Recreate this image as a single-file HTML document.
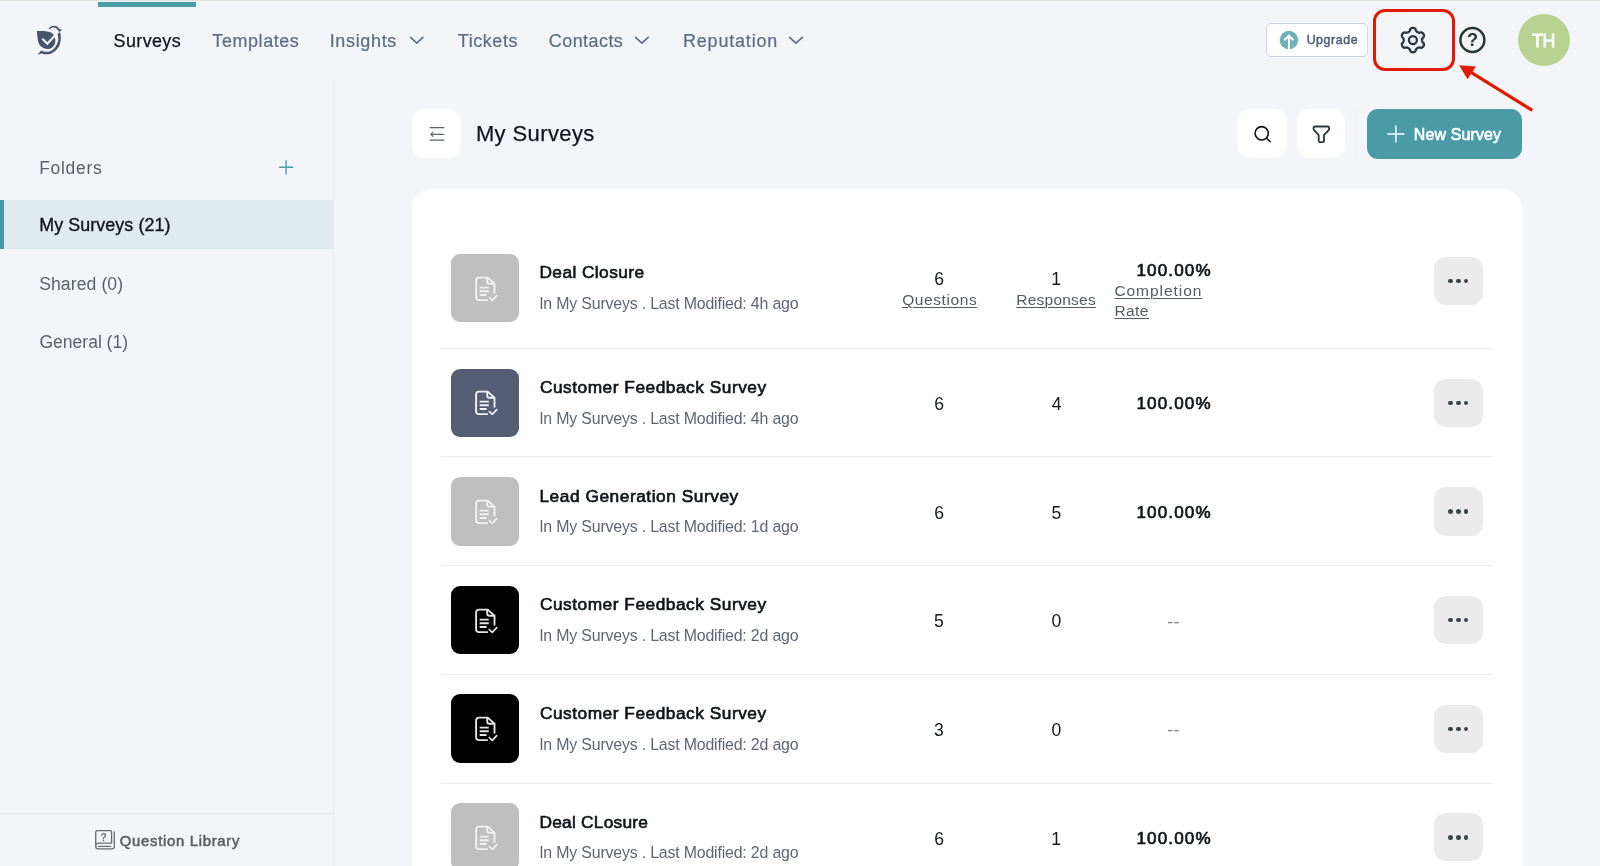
<!DOCTYPE html>
<html lang="en"><head><meta charset="utf-8"><title>My Surveys</title>
<style>
html,body{margin:0;padding:0}
body{width:1600px;height:866px;overflow:hidden;background:#f3f5f9;position:relative;font-family:"Liberation Sans",sans-serif;}
.t{position:absolute;white-space:nowrap;line-height:1;}#root{position:absolute;left:0;top:0;width:1600px;height:866px;will-change:transform}
.b{position:absolute;display:block}

</style></head><body><div id="root">
<header>
<div class="b" style="left:0.00px;top:0.00px;width:1600.00px;height:1.00px;background:#e3e4e2;border-radius:0px;"></div>
<div class="b" style="left:98.00px;top:2.40px;width:98.00px;height:4.60px;background:#4a9ba6;border-radius:0px;"></div>
<svg class="b" style="left:30px;top:20px" width="40" height="40" viewBox="30 20 40 40">
<g fill="#47546f">
<path d="M36.9 31.1 C41 30.6 46.5 31 50.3 32.2 C51.8 32.8 53 33.8 53.6 34.8 C55 37 55.6 40 55.2 42.2 C54.8 44.5 54.2 45.2 53.6 45.9 C52 47.8 50.5 48.6 48.5 48.9 C46.8 49.1 45.2 48.8 43.9 48.2 C42 47.3 40.6 46.3 39.7 44.9 C38.6 43.2 38.1 41.5 37.85 39.9 C37.4 37 37 34 36.9 31.1 Z"/>
<path d="M59.6 31.8 C61.3 35 61.2 41 59.6 44.9 C58 49 54 52.6 49.9 53.9 C47 54.7 44 54.3 42.2 53.4 L37.4 54.6 L41.3 50.5 C44 52.2 48 52 50.8 50.9 C54 49.5 56.8 45.5 57.9 41.7 C58.6 39 58.3 36.3 57.3 34.3 Z"/>
<path d="M48.7 28.5 C50 26.6 52.2 25.6 54 25.8 C55.8 25.9 57.3 26.5 58.2 27.4 L59.6 29.2 L62.3 29.5 L59.6 31.8 L58.9 32 C58.6 31 58.2 30.4 57.7 29.9 C56.8 28.6 55.4 27.7 54 27.6 C52.4 27.5 50.8 28.2 49.6 29.2 Z"/>
</g>
<path d="M42.3 38.8 L47.3 43.7 L58.3 31.9" fill="none" stroke="#f3f5f9" stroke-width="2.1"/>
</svg>
<div class="t" style="left:113.59px;top:32.81px;font-size:17.95px;letter-spacing:0.385px;color:#10151a;-webkit-text-stroke-width:0.25px;">Surveys</div>
<div class="t" style="left:212.35px;top:32.81px;font-size:17.95px;letter-spacing:0.590px;color:#5b6b87;-webkit-text-stroke-width:0.2px;">Templates</div>
<div class="t" style="left:329.66px;top:32.81px;font-size:17.95px;letter-spacing:0.685px;color:#5b6b87;-webkit-text-stroke-width:0.2px;">Insights</div>
<div class="t" style="left:457.80px;top:32.81px;font-size:17.95px;letter-spacing:0.591px;color:#5b6b87;-webkit-text-stroke-width:0.2px;">Tickets</div>
<div class="t" style="left:548.83px;top:32.81px;font-size:17.95px;letter-spacing:0.456px;color:#5b6b87;-webkit-text-stroke-width:0.2px;">Contacts</div>
<div class="t" style="left:682.97px;top:32.81px;font-size:17.95px;letter-spacing:0.842px;color:#5b6b87;-webkit-text-stroke-width:0.2px;">Reputation</div>
<svg class="b" style="left:408px;top:35.25px" width="17.5" height="10.75" viewBox="408 35.25 17.5 10.75"><path d="M410.6 37.65 L416.75 43.4 L422.9 37.65" fill="none" stroke="#5b6b87" stroke-width="1.6" stroke-linecap="round" stroke-linejoin="round"/></svg>
<svg class="b" style="left:633px;top:35.25px" width="17.799999999999955" height="10.75" viewBox="633 35.25 17.799999999999955 10.75"><path d="M635.6 37.65 L641.9 43.4 L648.1999999999999 37.65" fill="none" stroke="#5b6b87" stroke-width="1.6" stroke-linecap="round" stroke-linejoin="round"/></svg>
<svg class="b" style="left:787.3px;top:35.25px" width="17.90000000000009" height="10.75" viewBox="787.3 35.25 17.90000000000009 10.75"><path d="M789.9 37.65 L796.25 43.4 L802.6 37.65" fill="none" stroke="#5b6b87" stroke-width="1.6" stroke-linecap="round" stroke-linejoin="round"/></svg>
<div class="b" style="left:1265.70px;top:23.00px;width:102.10px;height:33.80px;background:#fff;border-radius:5px;border:1px solid #cdd4df;box-sizing:border-box;"></div>
<svg class="b" style="left:1278px;top:29px" width="22" height="22" viewBox="1278 29 22 22">
<circle cx="1288.9" cy="39.9" r="9.2" fill="#6db0b7"/>
<path d="M1288.9 49.4 V36.2 M1284.3 40.2 L1288.9 35.6 L1293.5 40.2" fill="none" stroke="#fff" stroke-width="2" stroke-linejoin="miter"/>
</svg>
<div class="t" style="left:1306.64px;top:33.80px;font-size:12.29px;letter-spacing:0.628px;color:#4e5d7b;-webkit-text-stroke-width:0.5px;">Upgrade</div>
<div class="b" style="left:1373.00px;top:9.00px;width:82.00px;height:62.00px;background:transparent;border-radius:12px;border:3px solid #e01b00;box-sizing:border-box;"></div>
<svg class="b" style="left:1396px;top:23px" width="34" height="34" viewBox="1396 23 34 34">
<path d="M1422.10 40.10 L1422.10 39.94 L1422.11 39.78 L1422.13 39.62 L1422.15 39.45 L1422.18 39.29 L1422.21 39.12 L1422.26 38.95 L1422.30 38.78 L1422.36 38.60 L1422.43 38.42 L1422.51 38.23 L1422.60 38.04 L1422.71 37.84 L1422.86 37.62 L1423.24 37.33 L1423.60 37.03 L1423.74 36.79 L1423.82 36.55 L1423.88 36.32 L1423.92 36.09 L1423.93 35.86 L1423.94 35.64 L1423.92 35.42 L1423.89 35.20 L1423.85 34.99 L1423.80 34.78 L1423.73 34.58 L1423.66 34.38 L1423.57 34.19 L1423.47 34.00 L1423.35 33.82 L1423.23 33.64 L1423.10 33.48 L1422.95 33.32 L1422.80 33.17 L1422.64 33.03 L1422.46 32.89 L1422.28 32.77 L1422.09 32.66 L1421.88 32.56 L1421.67 32.48 L1421.44 32.41 L1421.19 32.37 L1420.91 32.37 L1420.47 32.53 L1420.03 32.71 L1419.77 32.74 L1419.53 32.73 L1419.32 32.71 L1419.12 32.69 L1418.93 32.65 L1418.75 32.62 L1418.57 32.57 L1418.40 32.52 L1418.24 32.47 L1418.09 32.41 L1417.93 32.35 L1417.78 32.28 L1417.64 32.21 L1417.50 32.13 L1417.36 32.05 L1417.23 31.96 L1417.10 31.87 L1416.96 31.77 L1416.84 31.66 L1416.71 31.54 L1416.58 31.42 L1416.46 31.29 L1416.33 31.16 L1416.21 31.01 L1416.09 30.85 L1415.96 30.67 L1415.84 30.47 L1415.73 30.23 L1415.67 29.76 L1415.59 29.30 L1415.45 29.06 L1415.29 28.86 L1415.12 28.70 L1414.94 28.55 L1414.75 28.43 L1414.56 28.31 L1414.36 28.22 L1414.16 28.13 L1413.95 28.06 L1413.75 28.00 L1413.54 27.96 L1413.33 27.93 L1413.11 27.91 L1412.90 27.90 L1412.69 27.91 L1412.47 27.93 L1412.26 27.96 L1412.05 28.00 L1411.85 28.06 L1411.64 28.13 L1411.44 28.22 L1411.24 28.31 L1411.05 28.43 L1410.86 28.55 L1410.68 28.70 L1410.51 28.86 L1410.35 29.06 L1410.21 29.30 L1410.13 29.76 L1410.07 30.23 L1409.96 30.47 L1409.84 30.67 L1409.71 30.85 L1409.59 31.01 L1409.47 31.16 L1409.34 31.29 L1409.22 31.42 L1409.09 31.54 L1408.96 31.66 L1408.84 31.77 L1408.70 31.87 L1408.57 31.96 L1408.44 32.05 L1408.30 32.13 L1408.16 32.21 L1408.02 32.28 L1407.87 32.35 L1407.71 32.41 L1407.56 32.47 L1407.40 32.52 L1407.23 32.57 L1407.05 32.62 L1406.87 32.65 L1406.68 32.69 L1406.48 32.71 L1406.27 32.73 L1406.03 32.74 L1405.77 32.71 L1405.33 32.53 L1404.89 32.37 L1404.61 32.37 L1404.36 32.41 L1404.13 32.48 L1403.92 32.56 L1403.71 32.66 L1403.52 32.77 L1403.34 32.89 L1403.16 33.03 L1403.00 33.17 L1402.85 33.32 L1402.70 33.48 L1402.57 33.64 L1402.45 33.82 L1402.33 34.00 L1402.23 34.19 L1402.14 34.38 L1402.07 34.58 L1402.00 34.78 L1401.95 34.99 L1401.91 35.20 L1401.88 35.42 L1401.86 35.64 L1401.87 35.86 L1401.88 36.09 L1401.92 36.32 L1401.98 36.55 L1402.06 36.79 L1402.20 37.03 L1402.56 37.33 L1402.94 37.62 L1403.09 37.84 L1403.20 38.04 L1403.29 38.23 L1403.37 38.42 L1403.44 38.60 L1403.50 38.78 L1403.54 38.95 L1403.59 39.12 L1403.62 39.29 L1403.65 39.45 L1403.67 39.62 L1403.69 39.78 L1403.70 39.94 L1403.70 40.10 L1403.70 40.26 L1403.69 40.42 L1403.67 40.58 L1403.65 40.75 L1403.62 40.91 L1403.59 41.08 L1403.54 41.25 L1403.50 41.42 L1403.44 41.60 L1403.37 41.78 L1403.29 41.97 L1403.20 42.16 L1403.09 42.36 L1402.94 42.58 L1402.56 42.87 L1402.20 43.17 L1402.06 43.41 L1401.98 43.65 L1401.92 43.88 L1401.88 44.11 L1401.87 44.34 L1401.86 44.56 L1401.88 44.78 L1401.91 45.00 L1401.95 45.21 L1402.00 45.42 L1402.07 45.62 L1402.14 45.82 L1402.23 46.01 L1402.33 46.20 L1402.45 46.38 L1402.57 46.56 L1402.70 46.72 L1402.85 46.88 L1403.00 47.03 L1403.16 47.17 L1403.34 47.31 L1403.52 47.43 L1403.71 47.54 L1403.92 47.64 L1404.13 47.72 L1404.36 47.79 L1404.61 47.83 L1404.89 47.83 L1405.33 47.67 L1405.77 47.49 L1406.03 47.46 L1406.27 47.47 L1406.48 47.49 L1406.68 47.51 L1406.87 47.55 L1407.05 47.58 L1407.23 47.63 L1407.40 47.68 L1407.56 47.73 L1407.71 47.79 L1407.87 47.85 L1408.02 47.92 L1408.16 47.99 L1408.30 48.07 L1408.44 48.15 L1408.57 48.24 L1408.70 48.33 L1408.84 48.43 L1408.96 48.54 L1409.09 48.66 L1409.22 48.78 L1409.34 48.91 L1409.47 49.04 L1409.59 49.19 L1409.71 49.35 L1409.84 49.53 L1409.96 49.73 L1410.07 49.97 L1410.13 50.44 L1410.21 50.90 L1410.35 51.14 L1410.51 51.34 L1410.68 51.50 L1410.86 51.65 L1411.05 51.77 L1411.24 51.89 L1411.44 51.98 L1411.64 52.07 L1411.85 52.14 L1412.05 52.20 L1412.26 52.24 L1412.47 52.27 L1412.69 52.29 L1412.90 52.30 L1413.11 52.29 L1413.33 52.27 L1413.54 52.24 L1413.75 52.20 L1413.95 52.14 L1414.16 52.07 L1414.36 51.98 L1414.56 51.89 L1414.75 51.77 L1414.94 51.65 L1415.12 51.50 L1415.29 51.34 L1415.45 51.14 L1415.59 50.90 L1415.67 50.44 L1415.73 49.97 L1415.84 49.73 L1415.96 49.53 L1416.09 49.35 L1416.21 49.19 L1416.33 49.04 L1416.46 48.91 L1416.58 48.78 L1416.71 48.66 L1416.84 48.54 L1416.96 48.43 L1417.10 48.33 L1417.23 48.24 L1417.36 48.15 L1417.50 48.07 L1417.64 47.99 L1417.78 47.92 L1417.93 47.85 L1418.09 47.79 L1418.24 47.73 L1418.40 47.68 L1418.57 47.63 L1418.75 47.58 L1418.93 47.55 L1419.12 47.51 L1419.32 47.49 L1419.53 47.47 L1419.77 47.46 L1420.03 47.49 L1420.47 47.67 L1420.91 47.83 L1421.19 47.83 L1421.44 47.79 L1421.67 47.72 L1421.88 47.64 L1422.09 47.54 L1422.28 47.43 L1422.46 47.31 L1422.64 47.17 L1422.80 47.03 L1422.95 46.88 L1423.10 46.72 L1423.23 46.56 L1423.35 46.38 L1423.47 46.20 L1423.57 46.01 L1423.66 45.82 L1423.73 45.62 L1423.80 45.42 L1423.85 45.21 L1423.89 45.00 L1423.92 44.78 L1423.94 44.56 L1423.93 44.34 L1423.92 44.11 L1423.88 43.88 L1423.82 43.65 L1423.74 43.41 L1423.60 43.17 L1423.24 42.87 L1422.86 42.58 L1422.71 42.36 L1422.60 42.16 L1422.51 41.97 L1422.43 41.78 L1422.36 41.60 L1422.30 41.42 L1422.26 41.25 L1422.21 41.08 L1422.18 40.91 L1422.15 40.75 L1422.13 40.58 L1422.11 40.42 L1422.10 40.26 Z" fill="none" stroke="#27383c" stroke-width="2.3" stroke-linejoin="round"/>
<circle cx="1412.9" cy="40.1" r="4" fill="none" stroke="#27383c" stroke-width="2.3"/>
</svg>
<svg class="b" style="left:1456px;top:24px" width="33" height="33" viewBox="1456 24 33 33">
<circle cx="1472.4" cy="40" r="12.0" fill="none" stroke="#27383c" stroke-width="2.5"/>
</svg>
<div class="t" style="left:1466.91px;top:31.29px;font-size:18.20px;letter-spacing:0.000px;color:#27383c;font-weight:700;">?</div>
<div class="b" style="left:1517.80px;top:14.30px;width:51.80px;height:51.80px;background:#b8d38f;border-radius:26px;"></div>
<div class="t" style="left:1532.05px;top:32.99px;font-size:17.74px;letter-spacing:-0.313px;color:#fff;-webkit-text-stroke-width:0.8px;">TH</div>
<svg class="b" style="left:1450px;top:55px" width="100" height="70" viewBox="1450 55 100 70">
<path d="M1532.3 110.4 L1471.5 72.7" stroke="#e01b00" stroke-width="3.2" fill="none"/>
<path d="M1459.1 65.2 L1475.9 66.6 L1467.6 79.2 Z" fill="#e01b00"/>
</svg>
</header><aside>
<div class="b" style="left:333.00px;top:80.00px;width:1.00px;height:786.00px;background:#e9ebee;border-radius:0px;"></div>
<div class="t" style="left:39.27px;top:160.22px;font-size:17.46px;letter-spacing:0.707px;color:#5b6266;">Folders</div>
<svg class="b" style="left:277px;top:158px" width="18" height="18" viewBox="277 158 18 18"><path d="M279 167.3 H293.2 M286.1 160.2 V174.4" stroke="#4a9ba6" stroke-width="1.4" fill="none"/></svg>
<div class="b" style="left:0.00px;top:199.90px;width:333.00px;height:48.90px;background:#e1eaed;border-radius:0px;"></div>
<div class="b" style="left:0.00px;top:199.90px;width:3.80px;height:48.90px;background:#4a9ba6;border-radius:0px;"></div>
<div class="t" style="left:39.34px;top:216.77px;font-size:17.88px;letter-spacing:0.076px;color:#10151a;-webkit-text-stroke-width:0.35px;">My Surveys (21)</div>
<div class="t" style="left:39.17px;top:275.80px;font-size:17.60px;letter-spacing:0.087px;color:#5b6266;">Shared (0)</div>
<div class="t" style="left:39.42px;top:334.00px;font-size:17.60px;letter-spacing:-0.033px;color:#5b6266;">General (1)</div>
<div class="b" style="left:0.00px;top:812.80px;width:333.00px;height:1.00px;background:#e3e5e8;border-radius:0px;"></div>
<div class="t" style="left:119.86px;top:833.57px;font-size:14.80px;letter-spacing:0.730px;color:#5e5e5e;-webkit-text-stroke-width:0.55px;">Question Library</div>
<svg class="b" style="left:93px;top:828px" width="24" height="24" viewBox="93 828 24 24">
<g fill="none" stroke="#6c6c6c" stroke-width="1.3" stroke-linejoin="round" stroke-linecap="round">
<path d="M97.6 830.6 H110.2 Q111.6 830.6 111.6 832 V843.2 H98.6 Q95.7 843.2 95.7 846 V832.5 Q95.7 830.6 97.6 830.6 Z"/>
<path d="M114.3 832 V846.5 Q114.3 848.9 112 848.9 H98.4 Q95.7 848.9 95.7 846"/>
<path d="M98.6 846.4 H110.6" stroke-width="1.1"/>
</g></svg>
<div class="t" style="left:100.46px;top:832.67px;font-size:10.20px;letter-spacing:0.000px;color:#6a6e70;font-weight:700;">?</div>
</aside><main>
<div class="b" style="left:412.00px;top:109.30px;width:48.90px;height:48.80px;background:#fff;border-radius:13px;"></div>
<svg class="b" style="left:426px;top:124px" width="22" height="20" viewBox="426 124 22 20">
<g fill="none" stroke="#5c6467" stroke-width="1.25">
<path d="M429.7 127.7 H444.3 M431 134.3 H444.3 M429.7 140 H444.3"/>
<path d="M433.3 131.9 L430.8 134.3 L433.3 136.7" stroke-width="1.1"/>
</g></svg>
<div class="t" style="left:475.88px;top:123.23px;font-size:22.00px;letter-spacing:0.390px;color:#10151a;-webkit-text-stroke-width:0.25px;">My Surveys</div>
<div class="b" style="left:1238.00px;top:109.20px;width:49.30px;height:49.00px;background:#fff;border-radius:13px;"></div>
<div class="b" style="left:1296.90px;top:109.20px;width:48.50px;height:49.00px;background:#fff;border-radius:13px;"></div>
<svg class="b" style="left:1250px;top:122px" width="24" height="24" viewBox="1250 122 24 24">
<circle cx="1261.7" cy="133.3" r="6.65" fill="none" stroke="#101010" stroke-width="1.6"/>
<path d="M1266.6 138.2 L1270.2 141.7" stroke="#101010" stroke-width="1.6" stroke-linecap="round"/>
</svg>
<svg class="b" style="left:1309px;top:122px" width="24" height="24" viewBox="1309 122 24 24">
<path d="M1314.9 126.5 H1327.8 Q1329.1 126.5 1329.1 127.8 V129.6 L1324 135.2 V141 Q1324 142.1 1322.9 142.1 H1319.8 Q1318.7 142.1 1318.7 141 V135.2 L1313.6 129.6 V127.8 Q1313.6 126.5 1314.9 126.5 Z" fill="none" stroke="#27383c" stroke-width="1.8" stroke-linejoin="round"/>
</svg>
<div class="b" style="left:1355.60px;top:109.00px;width:1.00px;height:50.00px;background:#eceef1;border-radius:0px;"></div>
<div class="b" style="left:1366.70px;top:108.80px;width:155.10px;height:50.20px;background:#4a9ba6;border-radius:11px;"></div>
<svg class="b" style="left:1385px;top:124px" width="22" height="20" viewBox="1385 124 22 20"><path d="M1387.4 134 H1404.4 M1395.9 125.5 V142.5" stroke="#fff" stroke-width="1.4" fill="none"/></svg>
<div class="t" style="left:1413.85px;top:127.42px;font-size:15.92px;letter-spacing:0.154px;color:#fff;-webkit-text-stroke-width:0.6px;">New Survey</div>
<div class="b" style="left:412.00px;top:189.00px;width:1110.00px;height:711.00px;background:#fff;border-radius:20px;"></div>
<div class="b" style="left:451.05px;top:253.80px;width:68.35px;height:68.40px;background:#bfbfbf;border-radius:9px;"></div>
<svg class="b" style="left:473.55px;top:274.6px" width="30" height="32" viewBox="0 0 30 32">
<g fill="none" stroke="#f1f1f1" stroke-width="1.9" stroke-linecap="round" stroke-linejoin="round">
<path d="M20.5 17.8 V8.8 L13.7 2.6 H4.9 Q2.1 2.6 2.1 5.4 V22.3 Q2.1 25.1 4.9 25.1 H13.2"/>
<path d="M13.2 2.9 V6.5 Q13.2 8.8 15.5 8.8 H20.2"/>
<path d="M5.7 12.6 H14.8 M5.7 16.3 H14.8 M5.7 20 H12.6" stroke-width="1.9" stroke-linecap="butt"/>
<path d="M15.2 22.5 L18.3 25.4 L22.7 20.6" stroke-width="1.7"/>
</g></svg>
<div class="t" style="left:539.43px;top:263.84px;font-size:17.32px;letter-spacing:0.418px;color:#10151a;-webkit-text-stroke-width:0.65px;">Deal Closure</div>
<div class="t" style="left:539.13px;top:296.27px;font-size:15.92px;letter-spacing:-0.186px;color:#5f6672;">In My Surveys . Last Modified: 4h ago</div>
<div class="t" style="left:934.15px;top:270.50px;font-size:17.60px;letter-spacing:0.000px;color:#15191d;">6</div>
<div class="t" style="left:1051.28px;top:270.50px;font-size:17.60px;letter-spacing:0.000px;color:#15191d;">1</div>
<div class="t" style="left:1136.46px;top:261.98px;font-size:17.04px;letter-spacing:1.148px;color:#10151a;-webkit-text-stroke-width:0.7px;">100.00%</div>
<div class="t" style="left:902.19px;top:291.68px;font-size:15.50px;letter-spacing:0.588px;color:#545b63;text-decoration:underline;text-decoration-thickness:1px;text-underline-offset:2px;">Questions</div>
<div class="t" style="left:1016.34px;top:291.68px;font-size:15.50px;letter-spacing:0.225px;color:#545b63;text-decoration:underline;text-decoration-thickness:1px;text-underline-offset:2px;">Responses</div>
<div class="t" style="left:1114.40px;top:282.58px;font-size:15.50px;letter-spacing:0.954px;color:#545b63;text-decoration:underline;text-decoration-thickness:1px;text-underline-offset:2px;">Completion</div>
<div class="t" style="left:1114.39px;top:302.58px;font-size:15.50px;letter-spacing:0.438px;color:#545b63;text-decoration:underline;text-decoration-thickness:1px;text-underline-offset:2px;">Rate</div>
<div class="b" style="left:1433.90px;top:256.90px;width:48.80px;height:48.30px;background:#ebebeb;border-radius:12px;"></div>
<div class="b" style="left:1448.40px;top:278.90px;width:4.40px;height:4.40px;background:#3a474a;border-radius:3px;"></div>
<div class="b" style="left:1456.20px;top:278.90px;width:4.40px;height:4.40px;background:#3a474a;border-radius:3px;"></div>
<div class="b" style="left:1464.10px;top:278.90px;width:4.40px;height:4.40px;background:#3a474a;border-radius:3px;"></div>
<div class="b" style="left:441.00px;top:347.60px;width:1051.00px;height:1.00px;background:#ededed;border-radius:0px;"></div>
<div class="b" style="left:451.05px;top:368.50px;width:68.35px;height:68.40px;background:#575d75;border-radius:9px;"></div>
<svg class="b" style="left:473.55px;top:389.3px" width="30" height="32" viewBox="0 0 30 32">
<g fill="none" stroke="#f2f2f5" stroke-width="1.9" stroke-linecap="round" stroke-linejoin="round">
<path d="M20.5 17.8 V8.8 L13.7 2.6 H4.9 Q2.1 2.6 2.1 5.4 V22.3 Q2.1 25.1 4.9 25.1 H13.2"/>
<path d="M13.2 2.9 V6.5 Q13.2 8.8 15.5 8.8 H20.2"/>
<path d="M5.7 12.6 H14.8 M5.7 16.3 H14.8 M5.7 20 H12.6" stroke-width="1.9" stroke-linecap="butt"/>
<path d="M15.2 22.5 L18.3 25.4 L22.7 20.6" stroke-width="1.7"/>
</g></svg>
<div class="t" style="left:539.90px;top:378.54px;font-size:17.32px;letter-spacing:0.508px;color:#10151a;-webkit-text-stroke-width:0.65px;">Customer Feedback Survey</div>
<div class="t" style="left:539.13px;top:410.97px;font-size:15.92px;letter-spacing:-0.186px;color:#5f6672;">In My Surveys . Last Modified: 4h ago</div>
<div class="t" style="left:934.15px;top:395.85px;font-size:17.60px;letter-spacing:0.000px;color:#15191d;">6</div>
<div class="t" style="left:1051.66px;top:395.85px;font-size:17.60px;letter-spacing:0.000px;color:#15191d;">4</div>
<div class="t" style="left:1136.46px;top:395.03px;font-size:17.04px;letter-spacing:1.148px;color:#10151a;-webkit-text-stroke-width:0.7px;">100.00%</div>
<div class="b" style="left:1433.90px;top:378.60px;width:48.80px;height:48.30px;background:#ebebeb;border-radius:12px;"></div>
<div class="b" style="left:1448.40px;top:400.60px;width:4.40px;height:4.40px;background:#3a474a;border-radius:3px;"></div>
<div class="b" style="left:1456.20px;top:400.60px;width:4.40px;height:4.40px;background:#3a474a;border-radius:3px;"></div>
<div class="b" style="left:1464.10px;top:400.60px;width:4.40px;height:4.40px;background:#3a474a;border-radius:3px;"></div>
<div class="b" style="left:441.00px;top:456.35px;width:1051.00px;height:1.00px;background:#ededed;border-radius:0px;"></div>
<div class="b" style="left:451.05px;top:477.15px;width:68.35px;height:68.40px;background:#bfbfbf;border-radius:9px;"></div>
<svg class="b" style="left:473.55px;top:497.95px" width="30" height="32" viewBox="0 0 30 32">
<g fill="none" stroke="#f1f1f1" stroke-width="1.9" stroke-linecap="round" stroke-linejoin="round">
<path d="M20.5 17.8 V8.8 L13.7 2.6 H4.9 Q2.1 2.6 2.1 5.4 V22.3 Q2.1 25.1 4.9 25.1 H13.2"/>
<path d="M13.2 2.9 V6.5 Q13.2 8.8 15.5 8.8 H20.2"/>
<path d="M5.7 12.6 H14.8 M5.7 16.3 H14.8 M5.7 20 H12.6" stroke-width="1.9" stroke-linecap="butt"/>
<path d="M15.2 22.5 L18.3 25.4 L22.7 20.6" stroke-width="1.7"/>
</g></svg>
<div class="t" style="left:539.43px;top:488.19px;font-size:17.32px;letter-spacing:0.532px;color:#10151a;-webkit-text-stroke-width:0.65px;">Lead Generation Survey</div>
<div class="t" style="left:539.13px;top:518.62px;font-size:15.92px;letter-spacing:-0.186px;color:#5f6672;">In My Surveys . Last Modified: 1d ago</div>
<div class="t" style="left:934.15px;top:504.50px;font-size:17.60px;letter-spacing:0.000px;color:#15191d;">6</div>
<div class="t" style="left:1051.58px;top:504.50px;font-size:17.60px;letter-spacing:0.000px;color:#15191d;">5</div>
<div class="t" style="left:1136.46px;top:503.68px;font-size:17.04px;letter-spacing:1.148px;color:#10151a;-webkit-text-stroke-width:0.7px;">100.00%</div>
<div class="b" style="left:1433.90px;top:487.25px;width:48.80px;height:48.30px;background:#ebebeb;border-radius:12px;"></div>
<div class="b" style="left:1448.40px;top:509.25px;width:4.40px;height:4.40px;background:#3a474a;border-radius:3px;"></div>
<div class="b" style="left:1456.20px;top:509.25px;width:4.40px;height:4.40px;background:#3a474a;border-radius:3px;"></div>
<div class="b" style="left:1464.10px;top:509.25px;width:4.40px;height:4.40px;background:#3a474a;border-radius:3px;"></div>
<div class="b" style="left:441.00px;top:565.10px;width:1051.00px;height:1.00px;background:#ededed;border-radius:0px;"></div>
<div class="b" style="left:451.05px;top:585.80px;width:68.35px;height:68.40px;background:#000;border-radius:9px;"></div>
<svg class="b" style="left:473.55px;top:606.5999999999999px" width="30" height="32" viewBox="0 0 30 32">
<g fill="none" stroke="#e4e4e4" stroke-width="1.9" stroke-linecap="round" stroke-linejoin="round">
<path d="M20.5 17.8 V8.8 L13.7 2.6 H4.9 Q2.1 2.6 2.1 5.4 V22.3 Q2.1 25.1 4.9 25.1 H13.2"/>
<path d="M13.2 2.9 V6.5 Q13.2 8.8 15.5 8.8 H20.2"/>
<path d="M5.7 12.6 H14.8 M5.7 16.3 H14.8 M5.7 20 H12.6" stroke-width="1.9" stroke-linecap="butt"/>
<path d="M15.2 22.5 L18.3 25.4 L22.7 20.6" stroke-width="1.7"/>
</g></svg>
<div class="t" style="left:539.90px;top:595.84px;font-size:17.32px;letter-spacing:0.508px;color:#10151a;-webkit-text-stroke-width:0.65px;">Customer Feedback Survey</div>
<div class="t" style="left:539.13px;top:628.27px;font-size:15.92px;letter-spacing:-0.186px;color:#5f6672;">In My Surveys . Last Modified: 2d ago</div>
<div class="t" style="left:934.04px;top:613.15px;font-size:17.60px;letter-spacing:0.000px;color:#15191d;">5</div>
<div class="t" style="left:1051.61px;top:613.15px;font-size:17.60px;letter-spacing:0.000px;color:#15191d;">0</div>
<div class="t" style="left:1167.22px;top:612.64px;font-size:18.00px;letter-spacing:0.382px;color:#8a8a8a;">--</div>
<div class="b" style="left:1433.90px;top:595.90px;width:48.80px;height:48.30px;background:#ebebeb;border-radius:12px;"></div>
<div class="b" style="left:1448.40px;top:617.90px;width:4.40px;height:4.40px;background:#3a474a;border-radius:3px;"></div>
<div class="b" style="left:1456.20px;top:617.90px;width:4.40px;height:4.40px;background:#3a474a;border-radius:3px;"></div>
<div class="b" style="left:1464.10px;top:617.90px;width:4.40px;height:4.40px;background:#3a474a;border-radius:3px;"></div>
<div class="b" style="left:441.00px;top:673.85px;width:1051.00px;height:1.00px;background:#ededed;border-radius:0px;"></div>
<div class="b" style="left:451.05px;top:694.45px;width:68.35px;height:68.40px;background:#000;border-radius:9px;"></div>
<svg class="b" style="left:473.55px;top:715.25px" width="30" height="32" viewBox="0 0 30 32">
<g fill="none" stroke="#e4e4e4" stroke-width="1.9" stroke-linecap="round" stroke-linejoin="round">
<path d="M20.5 17.8 V8.8 L13.7 2.6 H4.9 Q2.1 2.6 2.1 5.4 V22.3 Q2.1 25.1 4.9 25.1 H13.2"/>
<path d="M13.2 2.9 V6.5 Q13.2 8.8 15.5 8.8 H20.2"/>
<path d="M5.7 12.6 H14.8 M5.7 16.3 H14.8 M5.7 20 H12.6" stroke-width="1.9" stroke-linecap="butt"/>
<path d="M15.2 22.5 L18.3 25.4 L22.7 20.6" stroke-width="1.7"/>
</g></svg>
<div class="t" style="left:539.90px;top:705.49px;font-size:17.32px;letter-spacing:0.508px;color:#10151a;-webkit-text-stroke-width:0.65px;">Customer Feedback Survey</div>
<div class="t" style="left:539.13px;top:736.92px;font-size:15.92px;letter-spacing:-0.186px;color:#5f6672;">In My Surveys . Last Modified: 2d ago</div>
<div class="t" style="left:934.07px;top:721.80px;font-size:17.60px;letter-spacing:0.000px;color:#15191d;">3</div>
<div class="t" style="left:1051.61px;top:721.80px;font-size:17.60px;letter-spacing:0.000px;color:#15191d;">0</div>
<div class="t" style="left:1167.22px;top:721.29px;font-size:18.00px;letter-spacing:0.382px;color:#8a8a8a;">--</div>
<div class="b" style="left:1433.90px;top:704.55px;width:48.80px;height:48.30px;background:#ebebeb;border-radius:12px;"></div>
<div class="b" style="left:1448.40px;top:726.55px;width:4.40px;height:4.40px;background:#3a474a;border-radius:3px;"></div>
<div class="b" style="left:1456.20px;top:726.55px;width:4.40px;height:4.40px;background:#3a474a;border-radius:3px;"></div>
<div class="b" style="left:1464.10px;top:726.55px;width:4.40px;height:4.40px;background:#3a474a;border-radius:3px;"></div>
<div class="b" style="left:441.00px;top:782.60px;width:1051.00px;height:1.00px;background:#ededed;border-radius:0px;"></div>
<div class="b" style="left:451.05px;top:803.10px;width:68.35px;height:68.40px;background:#bfbfbf;border-radius:9px;"></div>
<svg class="b" style="left:473.55px;top:823.9px" width="30" height="32" viewBox="0 0 30 32">
<g fill="none" stroke="#f1f1f1" stroke-width="1.9" stroke-linecap="round" stroke-linejoin="round">
<path d="M20.5 17.8 V8.8 L13.7 2.6 H4.9 Q2.1 2.6 2.1 5.4 V22.3 Q2.1 25.1 4.9 25.1 H13.2"/>
<path d="M13.2 2.9 V6.5 Q13.2 8.8 15.5 8.8 H20.2"/>
<path d="M5.7 12.6 H14.8 M5.7 16.3 H14.8 M5.7 20 H12.6" stroke-width="1.9" stroke-linecap="butt"/>
<path d="M15.2 22.5 L18.3 25.4 L22.7 20.6" stroke-width="1.7"/>
</g></svg>
<div class="t" style="left:539.43px;top:814.14px;font-size:17.32px;letter-spacing:0.238px;color:#10151a;-webkit-text-stroke-width:0.65px;">Deal CLosure</div>
<div class="t" style="left:539.13px;top:844.57px;font-size:15.92px;letter-spacing:-0.186px;color:#5f6672;">In My Surveys . Last Modified: 2d ago</div>
<div class="t" style="left:934.15px;top:831.45px;font-size:17.60px;letter-spacing:0.000px;color:#15191d;">6</div>
<div class="t" style="left:1051.28px;top:831.45px;font-size:17.60px;letter-spacing:0.000px;color:#15191d;">1</div>
<div class="t" style="left:1136.46px;top:829.63px;font-size:17.04px;letter-spacing:1.148px;color:#10151a;-webkit-text-stroke-width:0.7px;">100.00%</div>
<div class="b" style="left:1433.90px;top:813.20px;width:48.80px;height:48.30px;background:#ebebeb;border-radius:12px;"></div>
<div class="b" style="left:1448.40px;top:835.20px;width:4.40px;height:4.40px;background:#3a474a;border-radius:3px;"></div>
<div class="b" style="left:1456.20px;top:835.20px;width:4.40px;height:4.40px;background:#3a474a;border-radius:3px;"></div>
<div class="b" style="left:1464.10px;top:835.20px;width:4.40px;height:4.40px;background:#3a474a;border-radius:3px;"></div>
</main>
</div></body></html>
